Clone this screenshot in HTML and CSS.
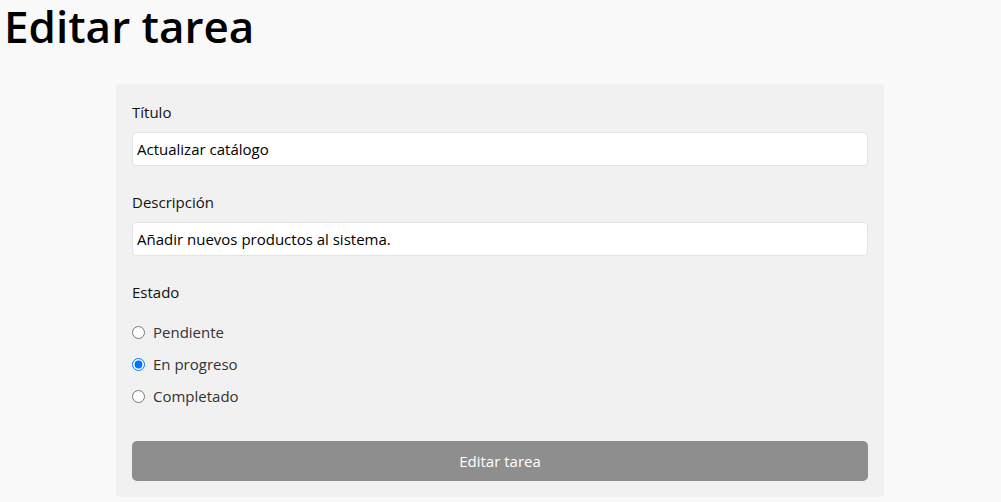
FILE: index.html
```html
<!DOCTYPE html>
<html lang="es">
<head>
<meta charset="utf-8">
<title>Editar tarea</title>
<link rel="stylesheet" href="styles.css">
</head>
<body>
<h1 class="page-title">Editar tarea</h1>
<form class="card">
  <div class="field">
    <label class="field-label" for="titulo">Título</label>
    <input class="text-input" id="titulo" type="text" value="Actualizar catálogo">
  </div>
  <div class="field">
    <label class="field-label" for="desc">Descripción</label>
    <input class="text-input" id="desc" type="text" value="Añadir nuevos productos al sistema.">
  </div>
  <div class="field">
    <span class="field-label">Estado</span>
    <div class="radios">
      <label class="radio-row"><input type="radio" name="estado" class="radio"> Pendiente</label>
      <label class="radio-row"><input type="radio" name="estado" class="radio" checked> En progreso</label>
      <label class="radio-row"><input type="radio" name="estado" class="radio"> Completado</label>
    </div>
  </div>
  <button type="button" class="submit">Editar tarea</button>
</form>
</body>
</html>
```
FILE: styles.css
```css
* { box-sizing: border-box; }
body {
  margin: 0;
  padding-right: 1px;
  background: #f9f9f9;
  font-family: "Open Sans", "Noto Sans", sans-serif;
  color: #111;
}
.page-title {
  margin: 0;
  padding: 1px 0 0 4px;
  font-size: 44px;
  font-weight: 600;
  line-height: 50px;
  color: #000;
}
.card {
  max-width: 768px;
  margin: 33px auto 0;
  background: #f1f1f1;
  border-radius: 4px;
  padding: 16px;
}
.field { margin-bottom: 24px; }
.field-label {
  display: block;
  font-size: 15px;
  line-height: 24px;
  margin-bottom: 8px;
}
.text-input {
  display: block;
  width: 100%;
  height: 34px;
  border: 1px solid #e2e2e2;
  border-radius: 4px;
  background: #fff;
  padding: 0 4px;
  font: inherit;
  font-size: 15px;
  color: #000;
}
.radios {
  display: flex;
  flex-direction: column;
  gap: 8px;
  padding-top: 8px;
}
.radio-row {
  display: flex;
  align-items: center;
  height: 24px;
  font-size: 15px;
  color: #333;
  gap: 8px;
}
.radio {
  margin: 0;
  width: 13px;
  height: 13px;
}
.submit {
  display: block;
  width: 100%;
  height: 40px;
  margin-top: 33px;
  border: none;
  border-radius: 5px;
  background: #8e8e8e;
  color: #fff;
  font: inherit;
  font-size: 15px;
}
.field:last-of-type { margin-bottom: 0; }
```
